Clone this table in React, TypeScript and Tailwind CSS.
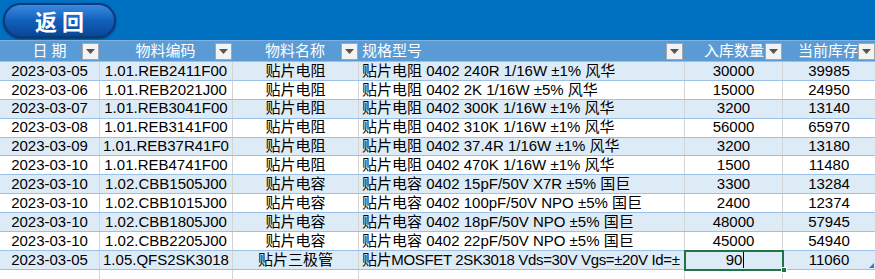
import React from "react";

const widths = [100, 133, 126, 326, 98, 92];

const rows: [string, string, string, string, string, string][] = [
  ["2023-03-05", "1.01.REB2411F00", "贴片电阻", "贴片电阻 0402 240R 1/16W ±1% 风华", "30000", "39985"],
  ["2023-03-06", "1.01.REB2021J00", "贴片电阻", "贴片电阻 0402 2K 1/16W ±5%  风华", "15000", "24950"],
  ["2023-03-07", "1.01.REB3041F00", "贴片电阻", "贴片电阻 0402 300K 1/16W ±1% 风华", "3200", "13140"],
  ["2023-03-08", "1.01.REB3141F00", "贴片电阻", "贴片电阻 0402 310K 1/16W ±1% 风华", "56000", "65970"],
  ["2023-03-09", "1.01.REB37R41F0", "贴片电阻", "贴片电阻 0402 37.4R 1/16W ±1% 风华", "3200", "13180"],
  ["2023-03-10", "1.01.REB4741F00", "贴片电阻", "贴片电阻 0402 470K 1/16W ±1%  风华", "1500", "11480"],
  ["2023-03-10", "1.02.CBB1505J00", "贴片电容", "贴片电容 0402 15pF/50V X7R ±5% 国巨", "3300", "13284"],
  ["2023-03-10", "1.02.CBB1015J00", "贴片电容", "贴片电容 0402 100pF/50V NPO ±5% 国巨", "2400", "12374"],
  ["2023-03-10", "1.02.CBB1805J00", "贴片电容", "贴片电容 0402 18pF/50V NPO ±5% 国巨", "48000", "57945"],
  ["2023-03-10", "1.02.CBB2205J00", "贴片电容", "贴片电容 0402 22pF/50V NPO ±5% 国巨", "45000", "54940"],
  ["2023-03-05", "1.05.QFS2SK3018", "贴片三极管", "贴片MOSFET 2SK3018 Vds=30V Vgs=±20V Id=±", "90", "11060"],
];

function Drop() {
  return (
    <div className="w-[17px] h-[17px] shrink-0 bg-[#f3f3f3] border border-[#a6a6a6] flex items-center justify-center">
      <svg width="9" height="5" viewBox="0 0 9 5">
        <path d="M0 0 L9 0 L4.5 5 Z" fill="#555" />
      </svg>
    </div>
  );
}

export default function App() {
  const font = { fontFamily: '"Liberation Sans","Noto Sans CJK SC",sans-serif' };
  return (
    <div className="w-[875px] h-[279px] overflow-hidden bg-white flex flex-col text-[15px] text-black" style={font}>
      {/* top bar */}
      <div className="h-[40px] shrink-0 bg-[#0070c0] flex items-center pl-[3px]">
        <div className="w-[113px] h-[35px] rounded-[18px] bg-[#0a3a80] p-[2px] shadow-[0_1px_2px_rgba(0,0,0,0.5)]">
          <div className="w-full h-full rounded-[16px] bg-gradient-to-b from-[#3a8ae0] via-[#1060bb] to-[#0a4796] flex items-center justify-center">
            <span
              className="text-white font-bold text-[22px] tracking-[5px] pl-[5px] leading-none"
              style={{ fontFamily: '"Noto Sans CJK SC",sans-serif' }}
            >
              返回
            </span>
          </div>
        </div>
      </div>
      {/* header */}
      <div className="h-[22px] shrink-0 flex bg-[#5b9bd5] border-t border-[#7fb2e3] border-b border-b-[#9bc2e6] text-white">
        <div className="w-[100px] flex items-center pr-[1px]">
          <span className="flex-1 text-center pl-[17px]">日 期</span>
          <Drop />
        </div>
        <div className="w-[133px] flex items-center pr-[1px]">
          <span className="flex-1 text-center pl-[16px]">物料编码</span>
          <Drop />
        </div>
        <div className="w-[126px] flex items-center pr-[1px]">
          <span className="flex-1 text-center pl-[16px]">物料名称</span>
          <Drop />
        </div>
        <div className="w-[326px] flex items-center pr-[2px]">
          <span className="flex-1 pl-[3px]">规格型号</span>
          <Drop />
        </div>
        <div className="w-[98px] flex items-center pr-[1px] justify-end">
          <span className="pr-[1px]">入库数量</span>
          <Drop />
        </div>
        <div className="w-[92px] flex items-center justify-end">
          <span>当前库存</span>
          <Drop />
        </div>
      </div>
      {/* rows */}
      {rows.map((r, i) => {
        const last = i === rows.length - 1;
        return (
          <div
            key={i}
            className={`h-[18.9px] shrink-0 flex border-b border-[#9bc2e6] ${i % 2 === 0 ? "bg-[#ddebf7]" : "bg-white"}`}
          >
            <div className="w-[100px] shrink-0 border-r border-[#d4d4d4] flex items-center justify-center">{r[0]}</div>
            <div className="w-[133px] shrink-0 border-r border-[#d4d4d4] flex items-center justify-center">{r[1]}</div>
            <div className="w-[126px] shrink-0 border-r border-[#d4d4d4] flex items-center justify-center">{r[2]}</div>
            <div
              className={`w-[326px] shrink-0 border-r border-[#d4d4d4] flex items-center pl-[3px] whitespace-nowrap ${
                last ? "tracking-[-0.35px]" : ""
              }`}
            >
              {r[3]}
            </div>
            {last ? (
              <div className="w-[98px] shrink-0 relative flex items-center justify-center">
                <div className="absolute -left-px -top-px w-[100px] h-[21px] border-2 border-[#217346]" />
                <div className="absolute right-[-4px] bottom-[-4px] w-[6px] h-[6px] bg-[#217346] border border-white" />
                <span className="pl-[2px]">90</span>
                <span className="inline-block w-px h-[16px] bg-black ml-[1px]" />
              </div>
            ) : (
              <div className="w-[98px] shrink-0 border-r border-[#d4d4d4] flex items-center justify-center">{r[4]}</div>
            )}
            <div className="w-[92px] shrink-0 flex items-center justify-center relative">
              {r[5]}
              {last && (
                <svg className="absolute right-[1px] bottom-[1px]" width="5" height="5" viewBox="0 0 5 5">
                  <path d="M5 0 L5 5 L0 5 Z" fill="#4472c4" />
                </svg>
              )}
            </div>
          </div>
        );
      })}
      <div className="flex-1 flex">
        {widths.map((w, i) => (
          <div
            key={i}
            className={i < widths.length - 1 ? "border-r border-[#d4d4d4] shrink-0" : "shrink-0"}
            style={{ width: w }}
          />
        ))}
      </div>
    </div>
  );
}
